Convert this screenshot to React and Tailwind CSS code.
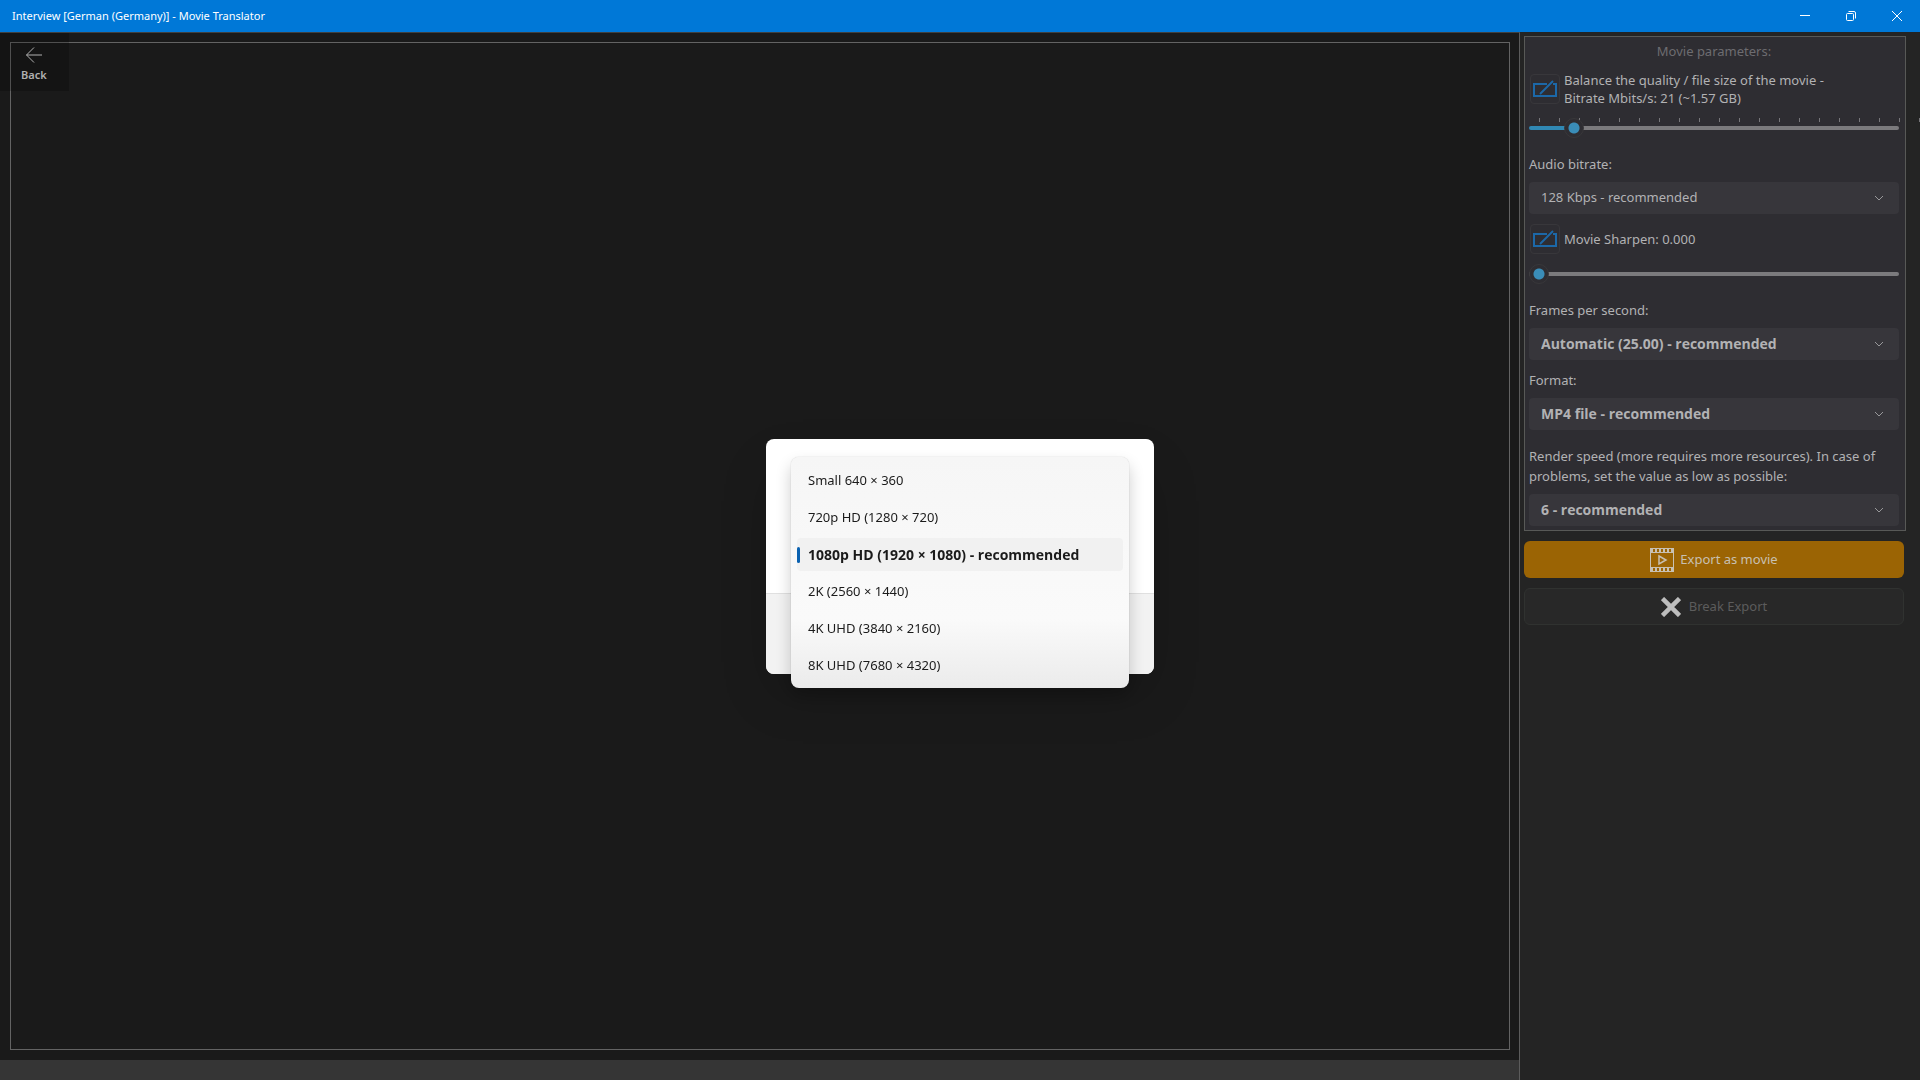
import React, { useState } from 'react';

const resolutions = [
  'Small 640 × 360',
  '720p HD (1280 × 720)',
  '1080p HD (1920 × 1080) - recommended',
  '2K (2560 × 1440)',
  '4K UHD (3840 × 2160)',
  '8K UHD (7680 × 4320)',
];

const ticks = Array.from({ length: 20 }, (_, i) => i);

function TitleBar() {
  return (
    <header className="flex h-8 shrink-0 items-center bg-[#0078d7] pl-3 text-white">
      <h1 className="flex-1 text-[11px] leading-4">Interview [German (Germany)] - Movie Translator</h1>
      <button aria-label="Minimize" className="flex h-8 w-[46px] items-center justify-center">
        <svg width="10" height="10" viewBox="0 0 10 10" stroke="currentColor"><path d="M0 4.5h10" /></svg>
      </button>
      <button aria-label="Restore" className="flex h-8 w-[46px] items-center justify-center">
        <svg width="10" height="10" viewBox="0 0 10 10" fill="none" stroke="currentColor">
          <rect x="0.5" y="2.5" width="7" height="7" rx="1" />
          <path d="M2.5 .5H8A1.5 1.5 0 0 1 9.5 2V7.5" />
        </svg>
      </button>
      <button aria-label="Close" className="flex h-8 w-[46px] items-center justify-center">
        <svg width="10" height="10" viewBox="0 0 10 10" stroke="currentColor"><path d="M0 0l10 10M10 0L0 10" /></svg>
      </button>
    </header>
  );
}

function ResetButton({ label }) {
  return (
    <button aria-label={label} className="flex size-[30px] shrink-0 items-center justify-center rounded-[4px] border border-[#38373b]">
      <svg width="24" height="18" viewBox="0 0 24 18" fill="none" stroke="#1c68a8" strokeWidth="2">
        <path d="M14 4H1v12h22V4h-3" />
        <path d="M7 14L20 1" />
      </svg>
    </button>
  );
}

function Slider({ label, min, max, step, value, onChange }) {
  const percent = ((value - min) / (max - min)) * 100;
  return (
    <input
      type="range"
      aria-label={label}
      min={min}
      max={max}
      step={step}
      value={value}
      onChange={e => onChange(Number(e.target.value))}
      style={{ '--fill': `${percent}%` }}
      className="block h-5 w-full appearance-none bg-transparent [&::-webkit-slider-runnable-track]:h-1 [&::-webkit-slider-runnable-track]:rounded-full [&::-webkit-slider-runnable-track]:bg-[linear-gradient(to_right,#3088b4_var(--fill),#7b7a7d_var(--fill))] [&::-webkit-slider-thumb]:-mt-2 [&::-webkit-slider-thumb]:size-5 [&::-webkit-slider-thumb]:appearance-none [&::-webkit-slider-thumb]:rounded-full [&::-webkit-slider-thumb]:border [&::-webkit-slider-thumb]:border-[#38373a] [&::-webkit-slider-thumb]:bg-[radial-gradient(circle,#3a8db8_5px,#2e2d32_6px)]"
    />
  );
}

function Dropdown({ id, label, option, bold }) {
  return (
    <div>
      <label htmlFor={id} className="block leading-5 whitespace-nowrap">{label}</label>
      <div className="relative mt-2">
        <select
          id={id}
          className={`block h-8 w-full appearance-none rounded-[4px] bg-[#37363b] px-3 ${bold ? "font-['Open_Sans',sans-serif] text-sm font-bold" : ''}`}
        >
          <option>{option}</option>
        </select>
        <svg className="pointer-events-none absolute top-3 right-4 text-[#98989a]" width="8" height="8" viewBox="0 0 8 8" fill="none" stroke="currentColor">
          <path d="M0 2l4 4 4-4" />
        </svg>
      </div>
    </div>
  );
}

function FilmIcon() {
  return (
    <svg width="24" height="24" viewBox="0 0 24 24" fill="none" stroke="currentColor">
      <rect x="0.5" y="0.5" width="23" height="23" />
      <path d="M0 4.5h24M0 19.5h24" />
      <path d="M1 2.5h22M1 21.5h22" strokeWidth="3" strokeDasharray="2 2" />
      <path d="M9 8l7 4-7 4z" strokeWidth="1.5" />
    </svg>
  );
}

function ParametersPanel() {
  const [bitrate, setBitrate] = useState(21);
  const [sharpen, setSharpen] = useState(0);

  return (
    <aside className="flex w-[400px] shrink-0 flex-col bg-[#242424] pt-1 pr-[14px] pl-1 text-[13px] text-[#b2b2b4]">
      <section className="border border-[#585957] bg-[#2e2d32] pr-[6px] pb-1 pl-1">
        <h2 className="mt-1 text-center leading-5 text-[#6d6c70]">Movie parameters:</h2>

        <div className="mt-[10px] flex items-center gap-1 pl-px">
          <ResetButton label="Reset bitrate" />
          <p className="leading-[18px]">
            Balance the quality / file size of the movie -<br />
            Bitrate Mbits/s: {bitrate} (~1.57 GB)
          </p>
        </div>
        <div className="mt-[11px] ml-[10px] flex h-1 gap-[19px]">
          {ticks.map(t => <span key={t} className="w-px shrink-0 bg-[#77767a]" />)}
        </div>
        <div className="-mt-1">
          <Slider label="Bitrate" min={1} max={201} step={1} value={bitrate} onChange={setBitrate} />
        </div>

        <div className="mt-4">
          <Dropdown id="audio" label="Audio bitrate:" option="128 Kbps - recommended" />
        </div>

        <div className="mt-[10px] flex items-center gap-1 pl-px">
          <ResetButton label="Reset sharpen" />
          <p className="leading-5">Movie Sharpen: {sharpen.toFixed(3)}</p>
        </div>
        <div className="mt-[10px]">
          <Slider label="Sharpen" min={0} max={1} step={0.001} value={sharpen} onChange={setSharpen} />
        </div>

        <div className="mt-4 flex flex-col gap-[10px]">
          <Dropdown id="fps" label="Frames per second:" option="Automatic (25.00) - recommended" bold />
          <Dropdown id="format" label="Format:" option="MP4 file - recommended" bold />
        </div>
        <div className="mt-4">
          <Dropdown
            id="speed"
            label={<>Render speed (more requires more resources). In case of<br />problems, set the value as low as possible:</>}
            option="6 - recommended"
            bold
          />
        </div>
      </section>

      <button className="mt-[10px] flex h-[37px] w-[380px] max-w-full items-center justify-center gap-[6px] rounded-md bg-[#9b6404] text-[#c8c0b2]">
        <FilmIcon />
        Export as movie
      </button>
      <button className="mt-[10px] flex h-[37px] w-[380px] max-w-full items-center justify-center gap-2 rounded-md border border-[#303230] bg-[#282828] text-[#5c5c5c]">
        <svg width="20" height="20" viewBox="0 0 20 20" stroke="#bdbdbd" strokeWidth="4.5"><path d="M1.5 1.5l17 17M18.5 1.5l-17 17" /></svg>
        Break Export
      </button>
    </aside>
  );
}

function ResolutionDialog() {
  const [selected, setSelected] = useState(2);

  return (
    <div className="fixed inset-x-0 top-[33px] bottom-0 flex items-center justify-center">
      <div role="dialog" aria-label="Resolution" className="relative h-[235px] w-[388px] rounded-lg bg-white shadow-2xl">
        <div className="absolute inset-x-0 bottom-0 h-[81px] rounded-b-lg border-t border-[#e0e0e0] bg-[#f2f2f2]" />
        <ul
          role="listbox"
          className="absolute top-[18px] left-[25px] w-[338px] rounded-lg bg-linear-to-b from-[#f6f6f6] via-[#fafafa] via-70% to-[#ebebeb] px-[6px] pt-[5px] pb-1 text-[13px] text-[#1b1b1b] shadow-[0_8px_16px_rgba(0,0,0,0.2),0_0_1px_rgba(0,0,0,0.3)]"
        >
          {resolutions.map((name, i) => (
            <li key={name} role="option" aria-selected={i === selected} className="py-[2px]">
              <button
                onClick={() => setSelected(i)}
                className={`relative flex h-[33px] w-full items-center rounded-[4px] pl-[11px] ${i === selected ? "bg-[#f1f1f1] font-['Open_Sans',sans-serif] text-sm font-bold" : ''}`}
              >
                {i === selected && <span className="absolute left-0 h-4 w-[3px] rounded-full bg-[#0b62b1]" />}
                {name}
              </button>
            </li>
          ))}
        </ul>
      </div>
    </div>
  );
}

export default function App() {
  return (
    <div className="flex h-screen flex-col overflow-hidden bg-[#242424] font-['Noto_Sans',sans-serif]">
      <TitleBar />
      <div className="flex min-h-0 flex-1">
        <main className="relative flex flex-1 flex-col border-t border-r border-t-[#404040] border-r-[#5c5c5c] bg-[#1a1a1a]">
          <div className="mt-[9px] mr-[9px] mb-[10px] ml-[10px] flex-1 border border-[#636363]" />
          <div className="h-5 bg-[#353535]" />
          <button className="absolute top-0 left-0 flex h-[58px] w-[69px] flex-col items-start bg-black/20 pt-[14px] pl-[21px] text-[11px] text-[#b0b0b0]">
            <svg className="ml-[5px]" width="16" height="16" viewBox="0 0 16 16" fill="none" stroke="currentColor"><path d="M16 8H.5M8 .5L.5 8 8 15.5" /></svg>
            <span className="mt-1 font-semibold leading-4">Back</span>
          </button>
        </main>
        <ParametersPanel />
      </div>
      <ResolutionDialog />
    </div>
  );
}
